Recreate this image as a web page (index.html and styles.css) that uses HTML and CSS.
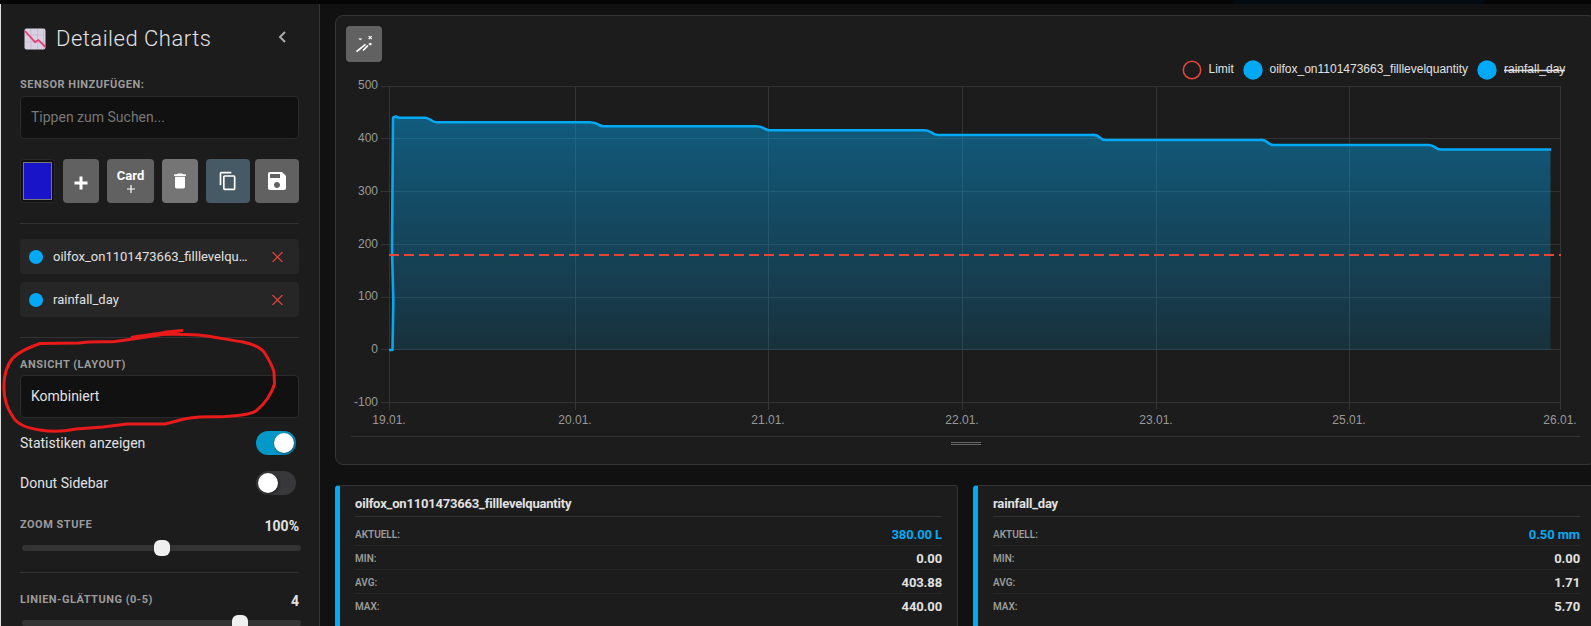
FILE: index.html
```
<!DOCTYPE html>
<html lang="de">
<head>
    <meta charset="UTF-8">
    <meta name="viewport" content="width=device-width, initial-scale=1.0">
    <title>Detailed Charts</title>
    <link rel="stylesheet" href="styles.css">
</head>
<body>
    <div class="topbar"><span></span></div>

    <div class="app">
        <aside class="sidebar">
            <header class="side-header">
                <svg class="logo" width="22" height="22" viewBox="0 0 22 22">
                    <rect x="0.5" y="0.5" width="21" height="21" rx="2" fill="#d9d1e2"/>
                    <path d="M7 1v20M13.500 1v20M1 7h20M1 14h20M19.500 1v20" stroke="#c6bdd2" fill="none"/>
                    <path d="M1 3l10 11 3.500-2 7 7" stroke="#e83a70" stroke-width="1.800" fill="none"/>
                </svg>
                <h1>Detailed Charts</h1>
                <svg class="collapse" width="9" height="12" viewBox="0 0 9 12"><path d="M7 1L2 6l5 5" fill="none" stroke="#aaa" stroke-width="2"/></svg>
            </header>

            <label class="caption search-label" for="search">SENSOR HINZUFÜGEN:</label>
            <input id="search" class="field" type="text" placeholder="Tippen zum Suchen...">

            <div class="toolbar">
                <button class="color-pick"><span></span></button>
                <button class="btn plus"><svg width="14" height="14" viewBox="0 0 14 14"><path d="M7 0.500v13M0.500 7h13" stroke="#fff" stroke-width="3"/></svg></button>
                <button class="btn card-add">Card<svg width="8" height="8" viewBox="0 0 8 8"><path d="M4 0v8M0 4h8" stroke="#fff" stroke-width="1.200"/></svg></button>
                <button class="btn trash"><svg width="20" height="20" viewBox="0 0 24 24"><path fill="#fff" d="M6 19c0 1.100.9 2 2 2h8c1.100 0 2-.9 2-2V7H6v12zM19 4h-3.500l-1-1h-5l-1 1H5v2h14V4z"/></svg></button>
                <button class="btn copy"><svg width="20" height="20" viewBox="0 0 24 24"><path fill="#fff" d="M16 1H4c-1.100 0-2 .9-2 2v14h2V3h12V1zm3 4H8c-1.100 0-2 .9-2 2v14c0 1.100.9 2 2 2h11c1.100 0 2-.9 2-2V7c0-1.100-.9-2-2-2zm0 16H8V7h11v14z"/></svg></button>
                <button class="btn save"><svg width="24" height="24" viewBox="0 0 24 24"><path fill="#fff" d="M17 3H5c-1.110 0-2 .9-2 2v14c0 1.100.89 2 2 2h14c1.100 0 2-.9 2-2V7l-4-4zm-5 16c-1.660 0-3-1.340-3-3s1.340-3 3-3 3 1.340 3 3-1.340 3-3 3zm3-10H5V5h10v4z"/></svg></button>
            </div>

            <ul class="sensors">
                <li><i></i><span>oilfox_on1101473663_filllevelqu…</span><svg width="11" height="10" viewBox="0 0 11 10"><path d="M.5 0l10 10M10.500 0l-10 10" stroke="#e0443a" stroke-width="1.200"/></svg></li>
                <li><i></i><span>rainfall_day</span><svg width="11" height="10" viewBox="0 0 11 10"><path d="M.5 0l10 10M10.500 0l-10 10" stroke="#e0443a" stroke-width="1.200"/></svg></li>
            </ul>

            <div class="caption layout-label">ANSICHT (LAYOUT)</div>
            <div class="field">Kombiniert</div>

            <div class="switch-row first">Statistiken anzeigen<span class="switch on"></span></div>
            <div class="switch-row">Donut Sidebar<span class="switch"></span></div>

            <div class="slider-head zoom"><span class="caption">ZOOM STUFE</span><b>100%</b></div>
            <div class="slider"><i style="left: 132px"></i></div>

            <div class="slider-head smooth"><span class="caption">LINIEN-GLÄTTUNG (0-5)</span><b>4</b></div>
            <div class="slider"><i style="left: 210px"></i></div>

            <!-- rote Markierung um die Layout-Auswahl -->
            <svg class="marker" width="290" height="120" viewBox="0 320 290 120">
                <path d="M131 337.500C143 335 157 334.500 166 332L182 330.500L162 334.500C150 336 132 340 115 341.500C103 342 91 341 79 343L40 343.500C30 347 18 352 12 359C6 367 4 374 4 385C3.500 396 6 407 13 417C18 425 27 428 40 430C52 432 66 431 76 429L103 427L127 424H165C174 422 181 419 190 418C202 416 212 417 225 416.500C238 415 248 416 256 411C265 404 272 393 274.500 384L274 372C272 365 268 358 264 352C260 347 252 344 243 342C228 340 212 336 198 335C182 334 163 334 145 335.500L131 337.500"/>
            </svg>
        </aside>

        <main class="content">
            <section class="chart-card">
                <button class="btn magic">
                    <svg width="18" height="18" viewBox="0 0 18 18">
                        <path d="M1.500 16.700L10.500 9.300M8 15.500L13 10.500" stroke="#fff" stroke-width="1.700" fill="none"/>
                        <path d="M13.700 1.200l3 3m0-3l-3 3" stroke="#fff" stroke-width="1.200"/>
                        <path d="M3.200 3.400h4.200l-2.100 1.900zM13.200 9.100l2-1.400 2 1.400-2 1.500z" fill="#fff"/>
                    </svg>
                </button>
                <svg class="chart" width="1255" height="420" viewBox="336 16 1255 420">
                    <defs>
                        <linearGradient id="fill" x1="0" y1="0" x2="0" y2="1">
                            <stop offset="0" stop-color="#03a9f4" stop-opacity="0.450"/>
                            <stop offset="1" stop-color="#03a9f4" stop-opacity="0.150"/>
                        </linearGradient>
                    </defs>
                    <path class="grid" d="M381 86.500H1561M381 138.500H1561M381 191.500H1561M381 244.500H1561M381 297.500H1561M381 349.500H1561M381 402.500H1561"/>
                    <path class="grid" d="M389.500 86V410M575.500 86V410M768.500 86V410M962.500 86V410M1156.500 86V410M1349.500 86V410M1560.500 86V410"/>
                    <path class="area" d="M389 350H392.500L392 250 393 116.500Q394 116 399 118H425C431 118 431 122.500 437 122.200H590C599 122.200 598 126.500 604 126.200H756C765 126.200 764 130.500 770 130.200H924C933 130.200 931 135.300 939 135H1092C1101 134 1098 140 1106 140H1260C1268 139 1267 145 1274 145H1428C1436 144.500 1434 150 1442 149.500H1550.500V350Z"/>
                    <path class="line" d="M389 350H392.500L393.300 300 392 250 393 118Q393.500 115.500 399 117.700H425C431 118 431 122.500 437 122.200H590C599 122.200 598 126.500 604 126.200H756C765 126.200 764 130.700 770 130.200H924C933 130.200 931 135.500 939 135H1092C1101 134 1098 140 1106 140H1260C1268 139 1267 145 1274 145H1428C1436 144.500 1434 150 1442 149.500H1551"/>
                    <path class="limit" d="M389 255H1561"/>

                    <g class="ylabels">
                        <text x="378" y="89">500</text>
                        <text x="378" y="142">400</text>
                        <text x="378" y="195">300</text>
                        <text x="378" y="248">200</text>
                        <text x="378" y="300">100</text>
                        <text x="378" y="353">0</text>
                        <text x="378" y="406">-100</text>
                    </g>
                    <g class="xlabels">
                        <text x="389" y="424">19.01.</text>
                        <text x="575" y="424">20.01.</text>
                        <text x="768" y="424">21.01.</text>
                        <text x="962" y="424">22.01.</text>
                        <text x="1156" y="424">23.01.</text>
                        <text x="1349" y="424">25.01.</text>
                        <text x="1560" y="424">26.01.</text>
                    </g>

                    <g class="legend">
                        <circle cx="1192" cy="70" r="8.700" stroke="#e8443a" stroke-width="1.500"/>
                        <text x="1208.500" y="73">Limit</text>
                        <circle cx="1253" cy="70" r="9.700"/>
                        <text x="1269.500" y="73">oilfox_on1101473663_filllevelquantity</text>
                        <circle cx="1487" cy="70" r="9.700"/>
                        <text x="1504" y="73">rainfall_day</text>
                        <path d="M1504 70.500H1565" stroke="#ddd" stroke-width="1.500"/>
                    </g>
                </svg>
                <div class="resize"><span></span></div>
            </section>

            <div class="stats">
                <section class="stat-card">
                    <h2>oilfox_on1101473663_filllevelquantity</h2>
                    <dl>
                        <div class="now"><dt>AKTUELL:</dt><dd>380.00 L</dd></div>
                        <div><dt>MIN:</dt><dd>0.00</dd></div>
                        <div><dt>AVG:</dt><dd>403.88</dd></div>
                        <div><dt>MAX:</dt><dd>440.00</dd></div>
                    </dl>
                </section>
                <section class="stat-card">
                    <h2>rainfall_day</h2>
                    <dl>
                        <div class="now"><dt>AKTUELL:</dt><dd>0.50 mm</dd></div>
                        <div><dt>MIN:</dt><dd>0.00</dd></div>
                        <div><dt>AVG:</dt><dd>1.71</dd></div>
                        <div><dt>MAX:</dt><dd>5.70</dd></div>
                    </dl>
                </section>
            </div>
        </main>
    </div>
</body>
</html>
```
FILE: styles.css
```
* {
    box-sizing: border-box;
}
body {
    margin: 0;
    height: 626px;
    overflow: hidden;
    background: #111;
    color: #e1e1e1;
    font-family: Roboto, "Liberation Sans", sans-serif;
    font-size: 14px;
}
h1, h2, ul, dl, dd {
    margin: 0;
    padding: 0;
}
button {
    border: none;
    padding: 0;
    font-family: inherit;
}
.topbar {
    height: 4px;
    padding-left: 1233px;
    background: #050505;
}
.topbar span {
    display: block;
    width: 251px;
    height: 4px;
    background: #010b11;
}
.app {
    display: flex;
    height: 622px;
}

/* Sidebar */
.sidebar {
    position: relative;
    flex: 0 0 320px;
    padding: 0 20px 0 19px;
    border-left: 1px solid #ddd;
    border-right: 1px solid #333;
    background: #1c1c1c;
    overflow: hidden;
}
.side-header {
    display: flex;
    align-items: center;
    height: 69px;
    padding-left: 4px;
}
.side-header h1 {
    flex: 1;
    margin-left: 10px;
    font-size: 22px;
    font-weight: 300;
    letter-spacing: 0.500px;
}
.collapse {
    margin: -3px 12px 0 0;
}
.caption {
    display: block;
    color: #9b9b9b;
    font-size: 11px;
    font-weight: 700;
    line-height: 14px;
    letter-spacing: 0.500px;
}
.search-label {
    margin: 5px 0 4px;
}
.field {
    display: block;
    width: 100%;
    height: 43px;
    padding: 0 10px;
    border: 1px solid #2b2b2b;
    border-radius: 4px;
    background: #111;
    color: #e1e1e1;
    font: 14px/41px Roboto, "Liberation Sans", sans-serif;
}
input.field {
    padding-bottom: 2px;
}
.field::placeholder {
    color: #777;
}
.toolbar {
    display: flex;
    height: 85px;
    padding: 20px 0;
    border-bottom: 1px solid #333;
}
.btn {
    display: flex;
    align-items: center;
    justify-content: center;
    width: 36px;
    height: 44px;
    margin-right: 8px;
    border-radius: 4px;
    background: #616161;
    color: #fff;
}
.color-pick {
    width: 35px;
    height: 44px;
    margin-right: 8px;
    padding: 2px;
    border: 1px solid #282828;
    border-radius: 4px;
    background: #111;
}
.color-pick span {
    display: block;
    width: 29px;
    height: 38px;
    border: 1px solid #777;
    background: #1a14c8;
}
.plus {
    padding-top: 3px;
}
.card-add {
    flex-direction: column;
    gap: 2px;
    width: 47px;
    padding-bottom: 2px;
    font-size: 13px;
    font-weight: 700;
    line-height: 15px;
}
.trash {
    background: #757575;
}
.copy {
    width: 44px;
    margin-right: 5px;
    background: #455a64;
}
.save {
    width: 44px;
    margin-right: 0;
}
.sensors {
    height: 114px;
    padding-top: 15px;
    border-bottom: 1px solid #333;
    list-style: none;
}
.sensors li {
    display: flex;
    align-items: center;
    height: 35px;
    margin-bottom: 8px;
    padding: 0 16px 0 9px;
    border-radius: 4px;
    background: #262626;
    font-size: 13px;
}
.sensors i {
    width: 14px;
    height: 14px;
    margin-right: 10px;
    border-radius: 50%;
    background: #03a9f4;
}
.sensors span {
    margin-right: auto;
    white-space: nowrap;
}
.layout-label {
    margin: 20px 0 3px;
}
.switch-row {
    display: flex;
    align-items: center;
    justify-content: space-between;
    height: 24px;
    margin-top: 16px;
    padding-right: 3px;
}
.switch-row.first {
    margin-top: 13px;
}
.switch {
    width: 40px;
    height: 24px;
    padding: 2px;
    border-radius: 12px;
    background: #38383a;
}
.switch::before {
    content: "";
    display: block;
    width: 20px;
    height: 20px;
    border-radius: 50%;
    background: #fff;
    box-shadow: 1px 1px 3px rgba(0, 0, 0, 0.5);
}
.switch.on {
    background: #0398c8;
}
.switch.on::before {
    margin-left: 16px;
}
.slider-head {
    display: flex;
    justify-content: space-between;
}
.slider-head b {
    line-height: 16px;
}
.slider-head.zoom {
    height: 50px;
    padding-top: 23px;
}
.slider-head.smooth {
    height: 48px;
    margin-top: 21px;
    padding-top: 20px;
    border-top: 1px solid #333;
}
.slider {
    position: relative;
    width: 279px;
    height: 6px;
    margin-left: 2px;
    border-radius: 3px;
    background: #333;
}
.slider i {
    position: absolute;
    top: -5px;
    width: 16px;
    height: 16px;
    border-radius: 6px;
    background: #efefef;
}
.marker {
    position: absolute;
    left: -1px;
    top: 316px;
}
.marker path {
    fill: none;
    stroke: #e81a1a;
    stroke-width: 3;
    stroke-linejoin: round;
}

/* Chart */
.content {
    flex: 0 0 1276px;
    padding: 11px 0 0 15px;
}
.chart-card {
    position: relative;
    height: 450px;
    border: 1px solid #333;
    border-radius: 8px;
    background: #1c1c1c;
}
.magic {
    position: absolute;
    left: 10px;
    top: 10px;
    height: 36px;
    background: #616161;
}
.chart {
    display: block;
}
.chart text {
    font: 12px "Liberation Sans", Arial, sans-serif;
}
.grid {
    fill: none;
    stroke: #333;
}
.area {
    fill: url(#fill);
}
.line {
    fill: none;
    stroke: #03a9f4;
    stroke-width: 2.600;
    stroke-linejoin: round;
}
.limit {
    stroke: #e8443a;
    stroke-width: 2;
    stroke-dasharray: 10 5;
}
.ylabels text {
    fill: #999;
    text-anchor: end;
}
.xlabels text {
    fill: #999;
    text-anchor: middle;
}
.legend text {
    fill: #e1e1e1;
}
.legend circle {
    fill: #03a9f4;
}
.legend circle:first-child {
    fill: none;
}
.resize {
    display: flex;
    justify-content: center;
    width: 1229px;
    margin-left: 15px;
    padding-top: 5px;
    border-top: 1px solid #333;
}
.resize span {
    width: 30px;
    height: 3px;
    border: solid #666;
    border-width: 1px 0;
}

/* Statistiken */
.stats {
    display: grid;
    grid-template-columns: 1fr 1fr;
    gap: 15px;
    margin-top: 20px;
}
.stat-card {
    height: 160px;
    padding: 10px 15px 0;
    border: 1px solid #333;
    border-left: 5px solid #03a9f4;
    border-radius: 4px;
    background: #1c1c1c;
}
.stat-card h2 {
    height: 21px;
    margin-bottom: 5px;
    border-bottom: 1px solid #333;
    font-size: 13px;
    line-height: 16px;
    letter-spacing: -0.190px;
}
.stat-card dl div {
    display: flex;
    align-items: center;
    justify-content: space-between;
    height: 24px;
    padding-top: 2px;
    border-bottom: 1px solid #272727;
}
.stat-card dl div:last-child {
    padding-top: 1px;
    border-bottom: none;
}
.stat-card dt {
    color: #9b9b9b;
    font-size: 10px;
    font-weight: 600;
}
.stat-card dd {
    font-size: 13px;
    font-weight: 700;
    letter-spacing: -0.100px;
}
.now dd {
    color: #03a9f4;
}
```
